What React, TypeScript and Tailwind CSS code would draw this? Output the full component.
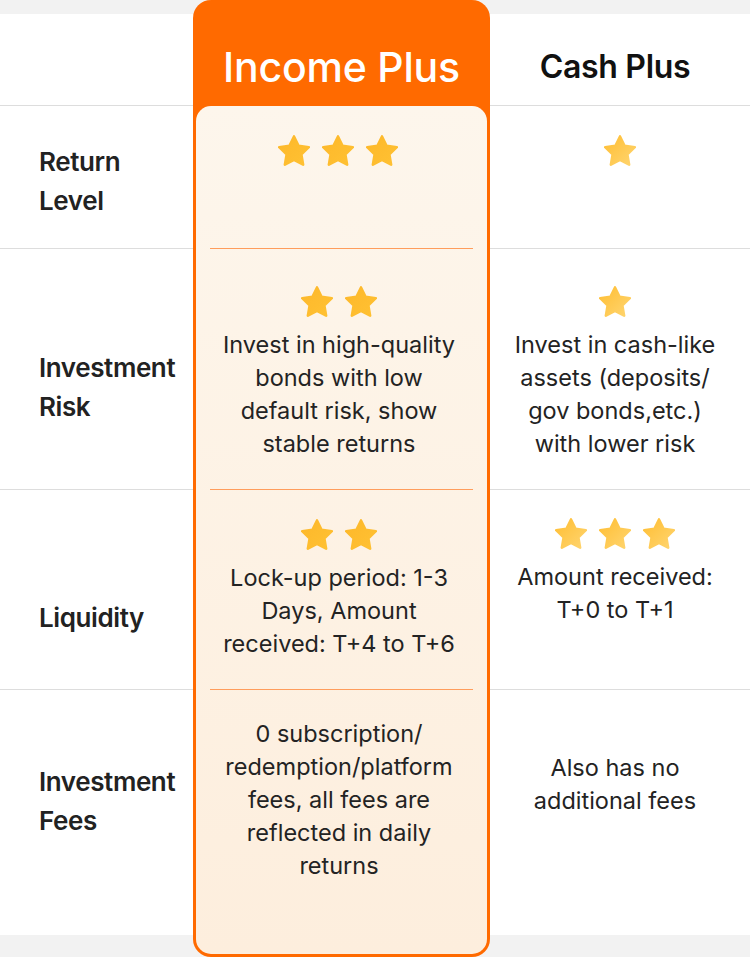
import React from "react";

const FONT = { fontFamily: "Inter, 'Noto Sans', sans-serif" };

function Star({ light = false }: { light?: boolean }) {
  const id = light ? "gl" : "gd";
  return (
    <svg width="32" height="32" viewBox="2 1.7 20 20" className="block">
      <defs>
        <linearGradient id="gl" x1="0" y1="0" x2="1" y2="1">
          <stop offset="0%" stopColor="#FFBE33" />
          <stop offset="100%" stopColor="#FFD570" />
        </linearGradient>
        <linearGradient id="gd" x1="0" y1="0" x2="1" y2="1">
          <stop offset="0%" stopColor="#FDB82A" />
          <stop offset="100%" stopColor="#FFC133" />
        </linearGradient>
      </defs>
      <path
        d="M12 2.6l2.85 5.8 6.4.93-4.63 4.52 1.09 6.38L12 17.22l-5.71 3.01 1.09-6.38L2.75 9.33l6.4-.93z"
        fill={`url(#${id})`}
        stroke={`url(#${id})`}
        strokeWidth="1.6"
        strokeLinejoin="round"
      />
    </svg>
  );
}

function Stars({ n, light = false }: { n: number; light?: boolean }) {
  return (
    <div className="flex justify-center gap-[12px]">
      {Array.from({ length: n }).map((_, i) => (
        <Star key={i} light={light} />
      ))}
    </div>
  );
}

function Lines({ lines }: { lines: string[] }) {
  return (
    <div className="text-[23.5px] leading-[33px] text-[#232323] text-center">
      {lines.map((l, i) => (
        <div key={i} className="whitespace-nowrap">
          {l}
        </div>
      ))}
    </div>
  );
}

function Label({ lines }: { lines: string[] }) {
  return (
    <div className="pl-[39px] text-[26px] leading-[39px] font-semibold text-[#222222] tracking-[-0.4px]">
      {lines.map((l, i) => (
        <div key={i}>{l}</div>
      ))}
    </div>
  );
}

export default function App() {
  return (
    <div className="w-[750px] h-[957px] bg-[#f2f2f2] flex" style={FONT}>
      {/* Left column */}
      <div className="w-[193px] mt-[14px] mb-[22px] bg-white flex flex-col">
        <div className="h-[92px] border-b border-[#dddddd]" />
        <div className="h-[143px] border-b border-[#dddddd] pt-[36px]">
          <Label lines={["Return", "Level"]} />
        </div>
        <div className="h-[241px] border-b border-[#dddddd] pt-[99px]">
          <Label lines={["Investment", "Risk"]} />
        </div>
        <div className="h-[200px] border-b border-[#dddddd] pt-[108px]">
          <Label lines={["Liquidity"]} />
        </div>
        <div className="flex-1 pt-[72px]">
          <Label lines={["Investment", "Fees"]} />
        </div>
      </div>

      {/* Middle highlighted column */}
      <div className="w-[297px] h-[957px] bg-[#ff6a00] rounded-[18px] p-[3px] flex flex-col">
        <div className="h-[103px] pt-[40px] text-center text-white text-[41px] leading-[48px] font-medium tracking-[-0.2px]">
          Income Plus
        </div>
        <div className="flex-1 rounded-[15px] bg-gradient-to-b from-[#fdf6ec] to-[#fdeedd] px-[14px] flex flex-col">
          <div className="h-[143px] border-b border-[#ff9d5c] pt-[29px] pr-[8px]">
            <Stars n={3} />
          </div>
          <div className="h-[241px] border-b border-[#ff9d5c] pt-[37px] pr-[5px] flex flex-col items-center gap-[10px]">
            <Stars n={2} />
            <Lines
              lines={[
                "Invest in high-quality",
                "bonds with low",
                "default risk, show",
                "stable returns",
              ]}
            />
          </div>
          <div className="h-[200px] border-b border-[#ff9d5c] pt-[29px] pr-[5px] flex flex-col items-center gap-[10px]">
            <Stars n={2} />
            <Lines
              lines={[
                "Lock-up period: 1-3",
                "Days, Amount",
                "received: T+4 to T+6",
              ]}
            />
          </div>
          <div className="flex-1 pt-[27px] pr-[5px]">
            <Lines
              lines={[
                "0 subscription/",
                "redemption/platform",
                "fees, all fees are",
                "reflected in daily",
                "returns",
              ]}
            />
          </div>
        </div>
      </div>

      {/* Right column */}
      <div className="w-[260px] mt-[14px] mb-[22px] bg-white flex flex-col">
        <div className="h-[92px] border-b border-[#dddddd] pt-[31px] pr-[10px] text-center text-[32px] leading-[44px] font-semibold text-[#111111] tracking-[-0.3px]">
          Cash Plus
        </div>
        <div className="h-[143px] border-b border-[#dddddd] pt-[29px]">
          <Stars n={1} light />
        </div>
        <div className="h-[241px] border-b border-[#dddddd] pt-[37px] pr-[10px] flex flex-col items-center gap-[10px]">
          <Stars n={1} light />
          <Lines
            lines={[
              "Invest in cash-like",
              "assets (deposits/",
              "gov bonds,etc.)",
              "with lower risk",
            ]}
          />
        </div>
        <div className="h-[200px] border-b border-[#dddddd] pt-[28px] pr-[10px] flex flex-col items-center gap-[10px]">
          <Stars n={3} light />
          <Lines lines={["Amount received:", "T+0 to T+1"]} />
        </div>
        <div className="flex-1 pt-[61px] pr-[10px]">
          <Lines lines={["Also has no", "additional fees"]} />
        </div>
      </div>
    </div>
  );
}
